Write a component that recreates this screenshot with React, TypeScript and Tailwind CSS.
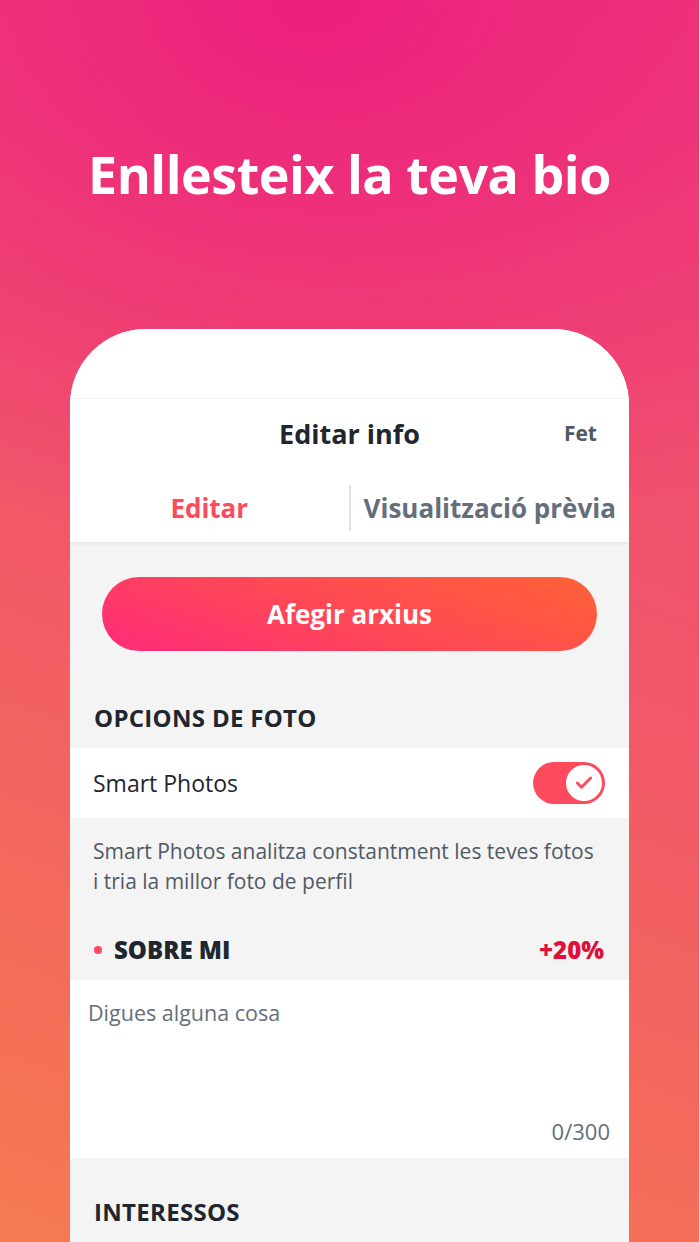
import { Check } from 'lucide-react';

const font = { fontFamily: '"Open Sans", "Lato", sans-serif' };

function Toggle() {
  return (
    <div className="flex h-[42px] w-[72px] items-center justify-end rounded-full bg-[#fd4a5c] p-px">
      <div className="flex h-[40px] w-[40px] items-center justify-center rounded-full border-2 border-[#fd4a5c] bg-white">
        <Check className="h-[20px] w-[20px] text-[#fd4a5c]" strokeWidth={3.5} />
      </div>
    </div>
  );
}

export default function App() {
  return (
    <div
      className="flex h-[1242px] w-[699px] flex-col overflow-hidden bg-[radial-gradient(ellipse_110%_45%_at_45%_0%,#ec1f7e_0%,rgba(236,31,126,0)_100%),linear-gradient(200deg,#ef4278_0%,#f15868_50%,#f57a50_100%)]"
      style={font}
    >
      {/* Headline */}
      <div className="flex h-[329px] shrink-0 items-start justify-center pt-[142px]">
        <h1 className="text-[52px] font-bold leading-[64px] tracking-[-0.5px] text-white">Enllesteix la teva bio</h1>
      </div>

      {/* Phone card */}
      <div className="mx-[70px] flex flex-1 flex-col overflow-hidden rounded-t-[76px] bg-[#f4f4f4]">
        <div className="h-[69px] shrink-0 bg-white" />
        <div className="h-px shrink-0 bg-[#f4f4f4]" />

        <div className="relative flex h-[70px] shrink-0 items-center justify-center bg-white">
          <span className="text-[27px] font-bold text-[#21262e]">Editar info</span>
          <span className="absolute right-[32px] text-[21px] font-bold text-[#505965]">Fet</span>
        </div>

        <div className="flex h-[73px] shrink-0 items-center bg-white pt-[5px] shadow-[0_2px_3px_rgba(0,0,0,0.06)]">
          <div className="flex flex-1 justify-center">
            <span className="text-[26px] font-bold text-[#fd4a5c]">Editar</span>
          </div>
          <div className="h-[46px] w-[2px] bg-[#e1e3e6]" />
          <div className="flex flex-1 justify-center">
            <span className="whitespace-nowrap text-[26px] font-bold text-[#656e7b]">Visualització prèvia</span>
          </div>
        </div>

        <div className="px-[32px] pt-[35px]">
          <button className="flex h-[74px] w-full items-center justify-center rounded-full bg-[linear-gradient(20deg,#fe2a7b_0%,#ff4658_45%,#ff6236_100%)] text-[26px] font-bold text-white">
            Afegir arxius
          </button>
        </div>

        <div className="px-[24px] pb-[14px] pt-[50px]">
          <span className="text-[24px] font-bold leading-[33px] tracking-[0.3px] text-[#21262e]">OPCIONS DE FOTO</span>
        </div>

        <div className="flex h-[70px] shrink-0 items-center justify-between bg-white pl-[23px] pr-[24px]">
          <span className="text-[23px] text-[#21262e]">Smart Photos</span>
          <Toggle />
        </div>

        <p className="pl-[23px] pr-[30px] pt-[18px] text-[21px] leading-[30px] text-[#505965]">
          Smart Photos analitza constantment les teves fotos i tria la millor foto de perfil
        </p>

        <div className="flex items-center justify-between pl-[24px] pr-[25px] pb-[12px] pt-[36px]">
          <div className="flex items-center gap-[12px]">
            <span className="h-[8px] w-[8px] rounded-full bg-[#fd4a5c]" />
            <span className="text-[24px] font-extrabold text-[#21262e]">SOBRE MI</span>
          </div>
          <span className="text-[24px] font-extrabold text-[#e0103a]">+20%</span>
        </div>

        <div className="flex h-[178px] shrink-0 flex-col justify-between bg-white pb-[12px] pl-[18px] pr-[19px] pt-[18px]">
          <span className="text-[21.5px] leading-[30px] text-[#656e7b]">Digues alguna cosa</span>
          <span className="self-end text-[22px] leading-[30px] text-[#656e7b]">0/300</span>
        </div>

        <div className="px-[24px] pt-[37px]">
          <span className="text-[24px] font-bold leading-[33px] tracking-[0.3px] text-[#21262e]">INTERESSOS</span>
        </div>
      </div>
    </div>
  );
}
